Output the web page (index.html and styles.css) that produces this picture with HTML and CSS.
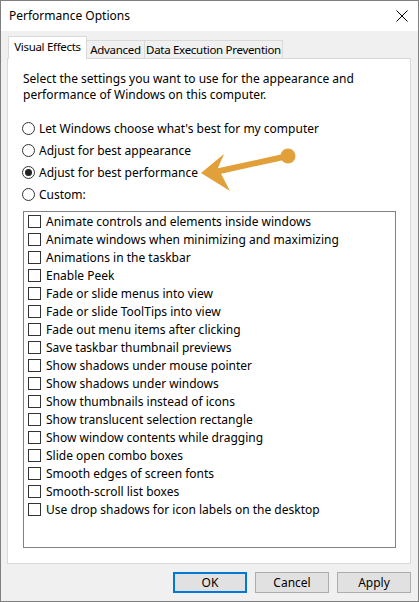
FILE: index.html
```html
<!DOCTYPE html>
<html lang="en">
<head>
  <meta charset="UTF-8">
  <title>Performance Options</title>
  <link rel="stylesheet" href="styles.css">
</head>
<body>
  <div class="window">
    <!-- title bar -->
    <div class="titlebar">
      <span class="title">Performance Options</span>
      <svg class="close" width="12" height="12" viewBox="0 0 12 12">
        <path d="M0.5 0.5 L11.5 11.5 M11.5 0.5 L0.5 11.5" stroke="#000" stroke-width="1" fill="none"/>
      </svg>
    </div>

    <div class="body">
      <!-- tabs -->
      <div class="tabs">
        <div class="tab active">Visual Effects</div>
        <div class="tab tab-adv">Advanced</div>
        <div class="tab tab-dep">Data Execution Prevention</div>
      </div>

      <div class="panel">
        <p class="intro">Select the settings you want to use for the appearance and<br>performance of Windows on this computer.</p>

        <div class="options">
          <div class="radio"><span class="circle"></span>Let Windows choose what's best for my computer</div>
          <div class="radio"><span class="circle"></span>Adjust for best appearance</div>
          <div class="radio"><span class="circle checked"></span>Adjust for best performance</div>
          <div class="radio"><span class="circle"></span>Custom:</div>
        </div>

        <div class="listbox">
          <div class="item"><span class="box"></span>Animate controls and elements inside windows</div>
          <div class="item"><span class="box"></span>Animate windows when minimizing and maximizing</div>
          <div class="item"><span class="box"></span>Animations in the taskbar</div>
          <div class="item"><span class="box"></span>Enable Peek</div>
          <div class="item"><span class="box"></span>Fade or slide menus into view</div>
          <div class="item"><span class="box"></span>Fade or slide ToolTips into view</div>
          <div class="item"><span class="box"></span>Fade out menu items after clicking</div>
          <div class="item"><span class="box"></span>Save taskbar thumbnail previews</div>
          <div class="item"><span class="box"></span>Show shadows under mouse pointer</div>
          <div class="item"><span class="box"></span>Show shadows under windows</div>
          <div class="item"><span class="box"></span>Show thumbnails instead of icons</div>
          <div class="item"><span class="box"></span>Show translucent selection rectangle</div>
          <div class="item"><span class="box"></span>Show window contents while dragging</div>
          <div class="item"><span class="box"></span>Slide open combo boxes</div>
          <div class="item"><span class="box"></span>Smooth edges of screen fonts</div>
          <div class="item"><span class="box"></span>Smooth-scroll list boxes</div>
          <div class="item"><span class="box"></span>Use drop shadows for icon labels on the desktop</div>
        </div>

        <!-- annotation arrow drawn over the panel -->
        <svg class="arrow" width="110" height="50" viewBox="0 0 110 50">
          <line x1="22" y1="24" x2="95" y2="8" stroke="#e1a03a" stroke-width="6"/>
          <circle cx="95" cy="8" r="7.5" fill="#e1a03a"/>
          <polygon points="8,25 31,6 25,20 37,43" fill="#e1a03a"/>
        </svg>
      </div>

      <!-- buttons -->
      <div class="buttons">
        <div class="btn default">OK</div>
        <div class="btn">Cancel</div>
        <div class="btn">Apply</div>
      </div>
    </div>
  </div>
</body>
</html>
```

FILE: styles.css
```css
/* page */
body {
  margin: 0;
  font-family: "Noto Sans", "Open Sans", sans-serif;
  font-size: 12px;
  color: #000;
}

.window {
  width: 419px;
  height: 602px;
  box-sizing: border-box;
  border: 1px solid #7f7f7f;
  background: #f0f0f0;
}

/* title bar */
.titlebar {
  height: 30px;
  background: #fff;
  display: flex;
  align-items: center;
  justify-content: space-between;
  padding: 0 10px 0 8px;
}

.title {
  font-size: 12px;
  margin-top: -1px;
}

.close {
  margin-top: -1px;
}

.body {
  padding: 5px 7px 0 6px;
}

/* tabs */
.tabs {
  display: flex;
  align-items: flex-end;
  height: 22px;
  padding-left: 1px;
}

.tab {
  box-sizing: border-box;
  height: 18px;
  border: 1px solid #d9d9d9;
  border-bottom: none;
  background: #f0f0f0;
  text-align: center;
  line-height: 17px;
  margin-left: -1px;
  white-space: nowrap;
  font-size: 11.5px;
  letter-spacing: -0.3px;
  overflow: hidden;
}

.tab.active {
  height: 23px;
  width: 79px;
  background: #fff;
  margin-bottom: -1px;
  margin-left: 0;
  position: relative;
  z-index: 1;
  line-height: 19px;
}

.tab-adv {
  width: 59px;
}

.tab-dep {
  width: 139px;
}

/* panel */
.panel {
  position: relative;
  box-sizing: border-box;
  width: 404px;
  height: 506px;
  background: #fff;
  border: 1px solid #d9d9d9;
  padding: 12px 15px 0 15px;
}

.intro {
  margin: 0;
  line-height: 16px;
}

.options {
  margin-top: 14px;
}

.radio {
  display: flex;
  align-items: center;
  height: 22px;
  margin-left: -1px;
}

.circle {
  width: 13px;
  height: 13px;
  box-sizing: border-box;
  border: 1px solid #333;
  border-radius: 50%;
  margin-right: 4px;
  display: flex;
  align-items: center;
  justify-content: center;
}

.circle.checked::after {
  content: "";
  width: 7px;
  height: 7px;
  border-radius: 50%;
  background: #222;
}

/* list of effects */
.listbox {
  box-sizing: border-box;
  width: 373px;
  height: 337px;
  margin-top: 6px;
  border: 1px solid #828282;
  padding: 0 0 0 4px;
}

.item {
  display: flex;
  align-items: center;
  height: 18px;
}

.box {
  width: 13px;
  height: 13px;
  box-sizing: border-box;
  border: 1px solid #333;
  margin-right: 5px;
}

.arrow {
  position: absolute;
  left: 185px;
  top: 89px;
}

/* bottom buttons */
.buttons {
  display: flex;
  justify-content: flex-end;
  gap: 8px;
  margin-top: 8px;
}

.btn {
  box-sizing: border-box;
  width: 74px;
  height: 21px;
  background: #e1e1e1;
  border: 1px solid #adadad;
  text-align: center;
  line-height: 19px;
}

.btn.default {
  border: 2px solid #0078d7;
  line-height: 17px;
}
```
